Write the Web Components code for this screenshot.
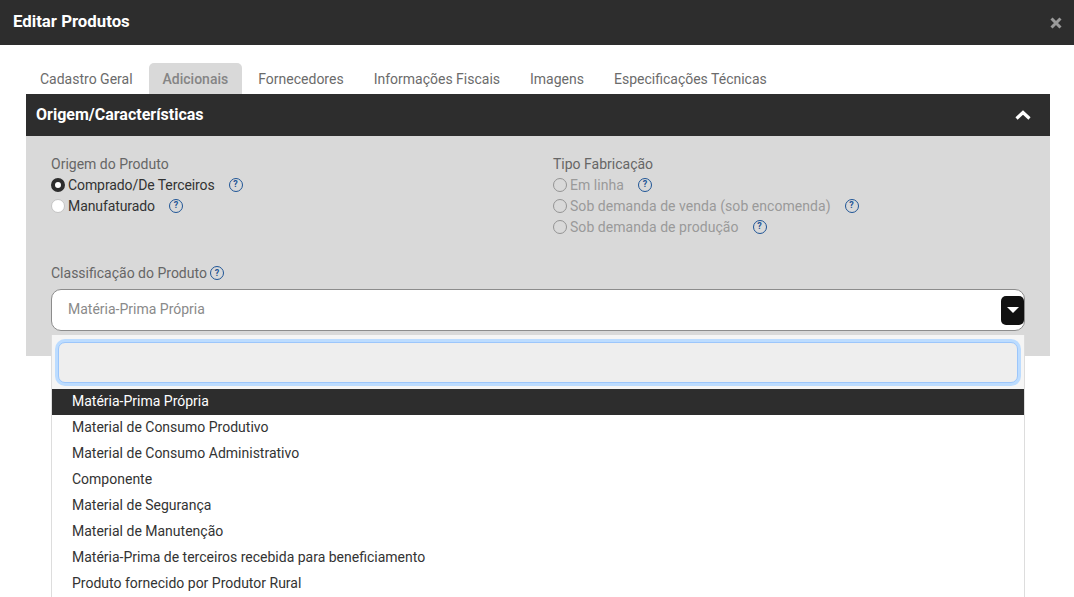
<!DOCTYPE html>
<html lang="pt-BR">
<head>
<meta charset="utf-8">
<title>Editar Produtos</title>
<style>
  html, body { margin: 0; height: 597px; overflow: hidden; background: #fff; }
  body { font-family: Roboto, "Liberation Sans", sans-serif; font-size: 14px; }
</style>
</head>
<body>
<modal-dialog titulo="Editar Produtos">
  <tab-bar>
    <tab-item>Cadastro Geral</tab-item>
    <tab-item ativo>Adicionais</tab-item>
    <tab-item>Fornecedores</tab-item>
    <tab-item>Informações Fiscais</tab-item>
    <tab-item>Imagens</tab-item>
    <tab-item>Especificações Técnicas</tab-item>
  </tab-bar>
  <fold-section titulo="Origem/Características">
    <radio-group titulo="Origem do Produto" slot="esquerda">
      <radio-option marcado>Comprado/De Terceiros</radio-option>
      <radio-option>Manufaturado</radio-option>
    </radio-group>
    <radio-group titulo="Tipo Fabricação" slot="direita">
      <radio-option desabilitado>Em linha</radio-option>
      <radio-option desabilitado>Sob demanda de venda (sob encomenda)</radio-option>
      <radio-option desabilitado>Sob demanda de produção</radio-option>
    </radio-group>
    <select-box slot="rodape" rotulo="Classificação do Produto" valor="Matéria-Prima Própria">
      <select-option ativo>Matéria-Prima Própria</select-option>
      <select-option>Material de Consumo Produtivo</select-option>
      <select-option>Material de Consumo Administrativo</select-option>
      <select-option>Componente</select-option>
      <select-option>Material de Segurança</select-option>
      <select-option>Material de Manutenção</select-option>
      <select-option>Matéria-Prima de terceiros recebida para beneficiamento</select-option>
      <select-option>Produto fornecido por Produtor Rural</select-option>
    </select-box>
  </fold-section>
</modal-dialog>

<script>
// Janela modal com cabecalho escuro
class ModalDialog extends HTMLElement {
  constructor() {
    super();
    this.attachShadow({ mode: 'open' });
  }
  connectedCallback() {
    this.shadowRoot.innerHTML = `
      <style>
        :host { display: block; }
        header {
          height: 45px;
          background: #2d2d2d;
          color: #fff;
          display: flex;
          align-items: center;
          justify-content: space-between;
          padding: 0 11px 0 13px;
          box-sizing: border-box;
        }
        h1 { margin: 0 0 4px; font-size: 16.8px; font-weight: 700; line-height: 20px; }
        svg { display: block; margin-top: 1px; }
        .corpo { padding: 18px 24px 0 26px; }
      </style>
      <header>
        <h1>${this.getAttribute('titulo') || ''}</h1>
        <svg width="14" height="14" viewBox="0 0 14 14">
          <path d="M2.5 2.5l9 9M11.500 2.500l-9 9" stroke="#9a9a9a" stroke-width="3" fill="none"/>
        </svg>
      </header>
      <div class="corpo"><slot></slot></div>
    `;
  }
}

class TabBar extends HTMLElement {
  constructor() {
    super();
    this.attachShadow({ mode: 'open' });
    this.shadowRoot.innerHTML = `
      <style>
        :host { display: flex; height: 31px; padding-left: 1px; gap: 4px; }
      </style>
      <slot></slot>
    `;
  }
}

class TabItem extends HTMLElement {
  constructor() {
    super();
    this.attachShadow({ mode: 'open' });
    this.shadowRoot.innerHTML = `
      <style>
        :host {
          display: block;
          padding: 0 13px;
          height: 31px;
          line-height: 32px;
          font-size: 14px;
          color: #6b6b6b;
          border-radius: 5px 5px 0 0;
          white-space: nowrap;
        }
        :host([ativo]) {
          background: #d9d9d9;
          color: #858585;
          font-weight: 500;
          padding: 0 14px;
          margin: 0 -1px;
        }
      </style>
      <slot></slot>
    `;
  }
}

class FoldSection extends HTMLElement {
  constructor() {
    super();
    this.attachShadow({ mode: 'open' });
  }
  connectedCallback() {
    this.shadowRoot.innerHTML = `
      <style>
        :host { display: block; }
        .topo {
          height: 42px;
          background: #2d2d2d;
          color: #fff;
          display: flex;
          align-items: center;
          justify-content: space-between;
          padding: 0 18px 0 10px;
        }
        h2 { margin: 0; font-size: 16px; font-weight: 700; line-height: 42px; }
        .painel {
          height: 220px;
          box-sizing: border-box;
          background: #d9d9d9;
          padding: 19px 25px 0;
        }
        .colunas { display: grid; grid-template-columns: 472px 472px; column-gap: 30px; height: 109px; }
      </style>
      <div class="topo">
        <h2>${this.getAttribute('titulo') || ''}</h2>
        <svg width="18" height="12" viewBox="0 0 18 12">
          <path d="M2.5 9.500L9 3.500l6.500 6" stroke="#fff" stroke-width="3.200" fill="none"/>
        </svg>
      </div>
      <div class="painel">
        <div class="colunas">
          <div><slot name="esquerda"></slot></div>
          <div><slot name="direita"></slot></div>
        </div>
        <slot name="rodape"></slot>
      </div>
    `;
  }
}

class RadioGroup extends HTMLElement {
  constructor() {
    super();
    this.attachShadow({ mode: 'open' });
  }
  connectedCallback() {
    this.shadowRoot.innerHTML = `
      <style>
        :host { display: block; }
        .rotulo { font-size: 14px; line-height: 18px; color: #666; margin-bottom: 1px; }
      </style>
      <div class="rotulo">${this.getAttribute('titulo') || ''}</div>
      <slot></slot>
    `;
  }
}

// Icone de ajuda "?" usado ao lado dos campos
class HelpIcon extends HTMLElement {
  constructor() {
    super();
    this.attachShadow({ mode: 'open' });
    this.shadowRoot.innerHTML = `
      <style>
        :host {
          display: inline-flex;
          align-items: center;
          justify-content: center;
          box-sizing: border-box;
          width: 14px;
          height: 14px;
          border: 1.4px solid #1f5596;
          border-radius: 50%;
          color: #1f5596;
          font: 700 9px/1 Roboto, sans-serif;
          letter-spacing: 0;
          flex: none;
        }
      </style>
      ?
    `;
  }
}

class RadioOption extends HTMLElement {
  constructor() {
    super();
    this.attachShadow({ mode: 'open' });
    this.shadowRoot.innerHTML = `
      <style>
        :host {
          display: flex;
          align-items: center;
          height: 21px;
          font-size: 14px;
          color: #333;
          letter-spacing: -0.09px;
        }
        :host([desabilitado]) { color: #9a9a9a; letter-spacing: 0.05px; }
        .bola {
          width: 14px;
          height: 14px;
          box-sizing: border-box;
          border-radius: 50%;
          background: #fff;
          border: 1px solid #c4c4c4;
          margin-right: 3px;
          flex: none;
        }
        :host([marcado]) .bola { border: 4px solid #2d2d2d; }
        :host([desabilitado]) .bola { background: transparent; border-color: #949494; }
        help-icon { margin-left: 14px; }
      </style>
      <span class="bola"></span>
      <slot></slot>
      <help-icon></help-icon>
    `;
  }
}

class SelectOption extends HTMLElement {
  constructor() {
    super();
    this.attachShadow({ mode: 'open' });
    this.shadowRoot.innerHTML = `
      <style>
        :host {
          display: block;
          height: 26px;
          line-height: 24px;
          padding-left: 20px;
          font-size: 14px;
          color: #333;
          background: #fff;
          white-space: nowrap;
        }
        :host([ativo]) { background: #2d2d2d; color: #fff; }
      </style>
      <slot></slot>
    `;
  }
}

// Select com a lista aberta por cima do conteudo
class SelectBox extends HTMLElement {
  constructor() {
    super();
    this.attachShadow({ mode: 'open' });
  }
  connectedCallback() {
    this.shadowRoot.innerHTML = `
      <style>
        :host { display: block; position: relative; }
        .rotulo {
          display: flex;
          align-items: center;
          gap: 3px;
          font-size: 14px;
          line-height: 18px;
          color: #666;
          margin-bottom: 7px;
        }
        .caixa {
          height: 42px;
          box-sizing: border-box;
          background: #fff;
          border: 1px solid #8c8c8c;
          border-radius: 10px;
          display: flex;
          align-items: center;
          justify-content: space-between;
          padding: 0 0 0 16px;
          color: #8a8a8a;
          font-size: 14px;
        }
        .caixa span:first-child { margin-top: -2px; }
        .seta {
          width: 23px;
          height: 29px;
          background: #111;
          border-radius: 5px;
          display: flex;
          align-items: center;
          justify-content: center;
        }
        .seta i {
          width: 0;
          height: 0;
          border: 6px solid transparent;
          border-top: 6px solid #fff;
          border-bottom: 0;
        }
        .lista {
          position: absolute;
          left: 0;
          right: 0;
          top: 71px;
          background: #fff;
          border-left: 1px solid #ddd;
          border-right: 1px solid #ddd;
          box-sizing: border-box;
        }
        .busca {
          display: block;
          padding: 7px 6px 6px;
          background: #f5f5f5;
        }
        .busca div {
          height: 41px;
          box-sizing: border-box;
          background: #eee;
          border: 1px solid #9cc6fb;
          border-radius: 7px;
          box-shadow: 0 0 0 3px #bcdcff;
        }
      </style>
      <div class="rotulo">${this.getAttribute('rotulo') || ''} <help-icon></help-icon></div>
      <div class="caixa">
        <span>${this.getAttribute('valor') || ''}</span>
        <span class="seta"><i></i></span>
      </div>
      <div class="lista">
        <div class="busca"><div></div></div>
        <slot></slot>
      </div>
    `;
  }
}

customElements.define('modal-dialog', ModalDialog);
customElements.define('tab-bar', TabBar);
customElements.define('tab-item', TabItem);
customElements.define('fold-section', FoldSection);
customElements.define('radio-group', RadioGroup);
customElements.define('help-icon', HelpIcon);
customElements.define('radio-option', RadioOption);
customElements.define('select-option', SelectOption);
customElements.define('select-box', SelectBox);
</script>
</body>
</html>
